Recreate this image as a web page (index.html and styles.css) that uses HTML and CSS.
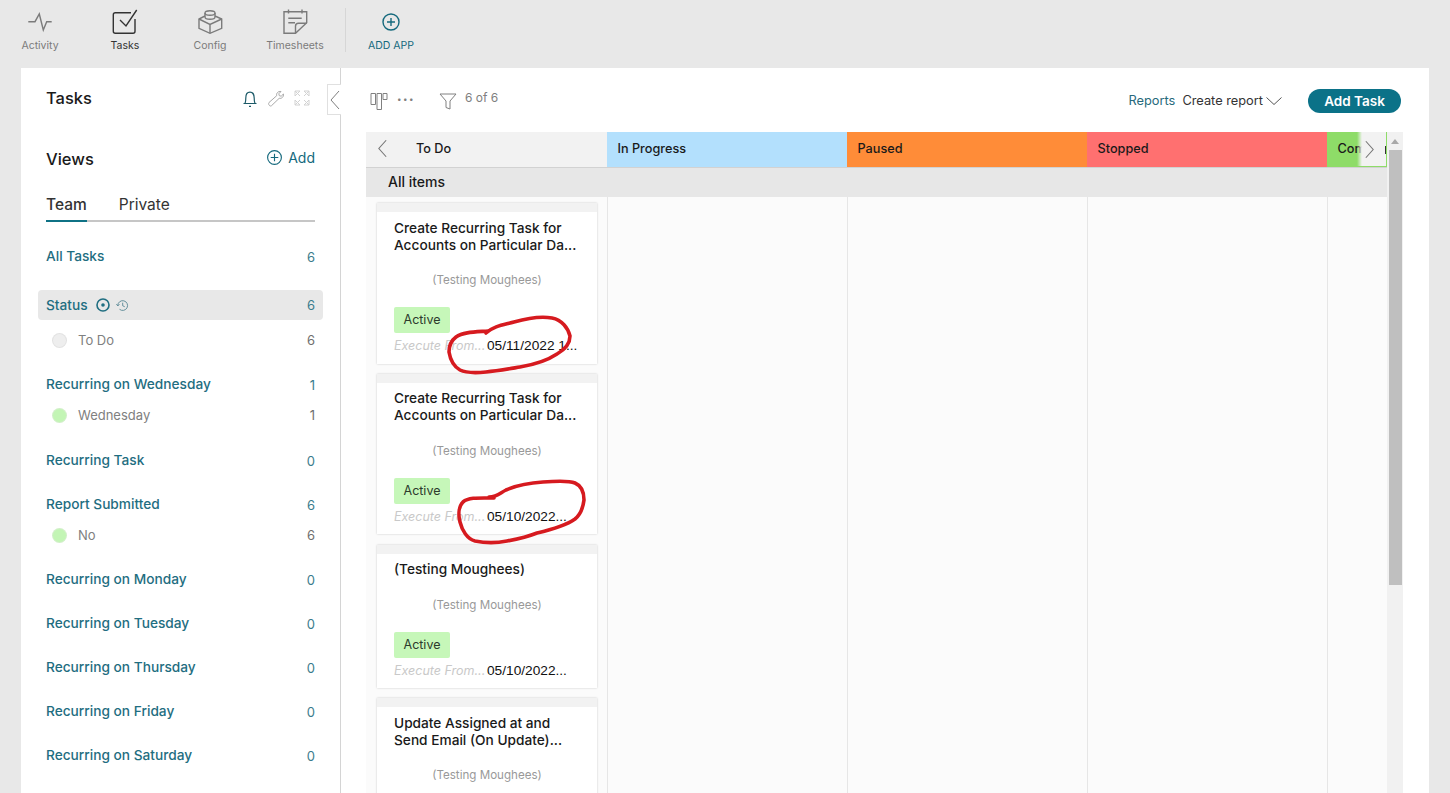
FILE: index.html
```html
<!DOCTYPE html>
<html lang="en">
<head>
  <meta charset="UTF-8" />
  <title>Tasks</title>
  <link rel="stylesheet" href="styles.css">
</head>
<body>
  <nav class="topnav">
    <a class="nav-item">
      <svg class="nav-icon" viewBox="0 0 28 28"><path d="M2.3 13.7H9L13.3 6l4 16 3.4-8.3h5"/></svg>
      <span>Activity</span>
    </a>
    <a class="nav-item active">
      <svg class="nav-icon" viewBox="0 0 28 28"><path d="M20 4.7H4.3a2 2 0 0 0-2 2v16.600a2 2 0 0 0 2 2H22a2 2 0 0 0 2-2V11"/><path d="M9 12l6 6L25.700 2"/></svg>
      <span>Tasks</span>
    </a>
    <a class="nav-item">
      <svg class="nav-icon" viewBox="0 0 28 28"><path d="M9 8L3 11v9.300l11 5 11.700-5V11L19 8"/><path d="M3 11l11 5.500L25.700 11M14 16.500v8.800"/><ellipse cx="14" cy="5" rx="5" ry="2.200"/><path d="M9 5v4c0 1.200 2.200 2.200 5 2.200s5-1 5-2.200V5"/></svg>
      <span>Config</span>
    </a>
    <a class="nav-item">
      <svg class="nav-icon" viewBox="0 0 28 28"><path d="M14.500 25.300H3V3.700h22.700v11z"/><path d="M14.500 25.300v-7a3 3 0 0 1 3-3h8.200M7.300 10.300h13.400M7.300 14.700H14M7.500 1.500v4M21 1.500v4"/></svg>
      <span>Timesheets</span>
    </a>
    <div class="nav-divider"></div>
    <a class="nav-add">
      <svg class="nav-icon" viewBox="0 0 28 28"><circle cx="14" cy="14" r="8"/><path d="M14 10v8M10 14h8"/></svg>
      <span>ADD APP</span>
    </a>
  </nav>

  <div class="panel">
    <aside class="sidebar">
      <div class="side-head">
        <h1>Tasks</h1>
        <div class="side-tools">
          <svg class="tool-icon bell" viewBox="0 0 18 18"><path d="M2.500 14.500h13M4 14.500c.6-1.200.8-2.600.8-5.500C4.800 5.800 6.400 3.200 9 3.200s4.200 2.600 4.200 5.800c0 2.900.2 4.300.8 5.500"/><path d="M8 17.300h2"/></svg>
          <svg class="tool-icon wrench" viewBox="0 0 18 18"><path d="M2 13.500l7.700-6.800c-.6-2.400 1.300-4.700 4.300-4.200l-2.200 2.300.5 1.900 1.900.5 2.200-2.200c.5 2.800-1.700 4.900-4.200 4.300L4.500 16.700c-1.500 1.300-3.800-1.500-2.500-3.200z"/></svg>
          <svg class="tool-icon expand" viewBox="0 0 18 18"><path d="M2 2l5 5M2 2v5l5-5zM16 2l-5 5M16 2v5l-5-5zM2 16l5-5M2 16v-5l5 5zM16 16l-5-5M16 16v-5l-5 5z"/></svg>
        </div>
      </div>

      <div class="views-head">
        <h2>Views</h2>
        <a class="views-add">
          <svg viewBox="0 0 18 18"><circle cx="9" cy="9" r="7.300"/><path d="M9 5v8M5 9h8"/></svg>
          Add
        </a>
      </div>

      <div class="tabs">
        <span class="tab current">Team</span>
        <span class="tab">Private</span>
      </div>

      <ul class="view-list">
        <li class="view-row"><span>All Tasks</span><b>6</b></li>
        <li class="view-row selected">
          <span>Status
            <svg class="status-icon" viewBox="0 0 16 16"><circle cx="8" cy="8" r="6"/><circle class="pip" cx="8" cy="8" r="1"/></svg>
            <svg class="history-icon" viewBox="0 0 16 16"><path d="M1.500 6.500l1.500 2 1.700-1.800"/><path d="M3 8a5.200 5.200 0 1 1 1.800 4"/><path d="M8.200 5v3.300l2.200 1"/></svg>
          </span>
          <b>6</b>
        </li>
        <li class="sub-row"><i class="dot grey"></i><span>To Do</span><b>6</b></li>
        <li class="view-row"><span>Recurring on Wednesday</span><b>1</b></li>
        <li class="sub-row"><i class="dot green"></i><span>Wednesday</span><b>1</b></li>
        <li class="view-row spaced"><span>Recurring Task</span><b>0</b></li>
        <li class="view-row"><span>Report Submitted</span><b>6</b></li>
        <li class="sub-row"><i class="dot green"></i><span>No</span><b>6</b></li>
        <li class="view-row"><span>Recurring on Monday</span><b>0</b></li>
        <li class="view-row"><span>Recurring on Tuesday</span><b>0</b></li>
        <li class="view-row"><span>Recurring on Thursday</span><b>0</b></li>
        <li class="view-row"><span>Recurring on Friday</span><b>0</b></li>
        <li class="view-row"><span>Recurring on Saturday</span><b>0</b></li>
        <li class="view-row"><span>Recurring on Sunday</span><b>0</b></li>
      </ul>
    </aside>

    <button class="collapse">
      <svg viewBox="0 0 12 24"><path d="M10 3L2 12l8 9"/></svg>
    </button>

    <main class="main">
      <div class="toolbar">
        <div class="toolbar-left">
          <svg class="board-icon" viewBox="0 0 18 18"><path d="M1 1.500h4.500v11H1zM7 1.500h4.500v16H7zM13 1.500h4v6h-4z"/></svg>
          <span class="dots">&#8226;&#8226;&#8226;</span>
          <svg class="filter-icon" viewBox="0 0 18 18"><path d="M1 2h16l-6 7v8l-4-1.500V9z"/></svg>
          <span class="count">6 of 6</span>
        </div>
        <div class="toolbar-right">
          <a class="reports">Reports</a>
          <a class="create">Create report</a>
          <svg class="down" viewBox="0 0 16 8"><path d="M.5.500L8 7.500 15.500.5"/></svg>
          <button class="add-task">Add Task</button>
        </div>
      </div>

      <div class="board">
        <div class="board-main">
          <div class="columns-head">
            <div class="col-head todo">
              <svg class="arrow" viewBox="0 0 12 20"><path d="M10 1L2 10l8 9"/></svg>
              To Do
            </div>
            <div class="col-head progress">In Progress</div>
            <div class="col-head paused">Paused</div>
            <div class="col-head stopped">Stopped</div>
            <div class="col-head complete">Complete</div>
            <div class="next-cols">
              <svg class="arrow" viewBox="0 0 12 20"><path d="M2 1l8 9-8 9"/></svg>
            </div>
          </div>
          <div class="lane-title">All items</div>
          <div class="columns">
            <div class="col first">
              <article class="card">
                <h3>Create Recurring Task for<br>Accounts on Particular Da...</h3>
                <p class="owner">(Testing Moughees)</p>
                <span class="badge">Active</span>
                <p class="meta"><em>Execute From...</em><span>05/11/2022 1...</span></p>
              </article>
              <article class="card">
                <h3>Create Recurring Task for<br>Accounts on Particular Da...</h3>
                <p class="owner">(Testing Moughees)</p>
                <span class="badge">Active</span>
                <p class="meta"><em>Execute From...</em><span>05/10/2022...</span></p>
              </article>
              <article class="card">
                <h3>(Testing Moughees)</h3>
                <p class="owner">(Testing Moughees)</p>
                <span class="badge">Active</span>
                <p class="meta"><em>Execute From...</em><span>05/10/2022...</span></p>
              </article>
              <article class="card">
                <h3>Update Assigned at and<br>Send Email (On Update)...</h3>
                <p class="owner">(Testing Moughees)</p>
                <span class="badge">Active</span>
                <p class="meta"><em>Execute From...</em><span>05/10/2022...</span></p>
              </article>
            </div>
            <div class="col"></div>
            <div class="col"></div>
            <div class="col"></div>
            <div class="col"></div>
          </div>
        </div>
        <div class="scrollbar">
          <div class="scroll-up"></div>
          <div class="scroll-thumb"></div>
        </div>
      </div>
    </main>
  </div>

  <!-- red marks drawn on top of the screenshot -->
  <svg class="scribbles" viewBox="0 0 1450 793">
    <path d="M486 333C494 326 503 325 514 322C528 318 541 316 552 318C562 320 568 328 570 336C570 344 564 350 557 354C545 362 532 365 520 367C508 369 497 371 486 372C476 373 466 373 460 370C453 366 450 358 449 352C449 345 452 340 456 337C463 332 475 332 488 331"/>
    <path d="M489 497C497 497 500 493 506 490C515 486 527 483 543 482C555 481 568 480 575 483C582 486 584 493 584 500C583 508 580 515 575 519C565 526 550 530 537 533C527 537 518 539 507 541C497 543 485 543 475 541C467 539 462 530 460 522C458 514 459 506 463 502C469 497 480 498 494 498"/>
  </svg>
</body>
</html>
```

FILE: styles.css
```css
* {
  box-sizing: border-box;
}

html,
body {
  height: 100%;
}

body {
  margin: 0;
  background: #e8e8e8;
  font-family: Inter, 'Liberation Sans', sans-serif;
  color: #1a1a1a;
  overflow: hidden;
  position: relative;
}

h1, h2, h3, p, ul {
  margin: 0;
  padding: 0;
}

svg {
  fill: none;
  stroke: currentColor;
  stroke-width: 1.2;
}

/* Top nav */
.topnav {
  height: 68px;
  display: flex;
  gap: 5px;
}

.nav-item,
.nav-add {
  width: 80px;
  padding-top: 8px;
  display: flex;
  flex-direction: column;
  align-items: center;
  font-size: 10.5px;
  color: #7b7b7b;
}

.nav-item span,
.nav-add span {
  margin-top: 3px;
}

.nav-icon {
  width: 28px;
  height: 28px;
  stroke-width: 1.4;
}

.nav-item.active {
  color: #333;
}

.nav-divider {
  width: 1px;
  height: 44px;
  margin: 8px 10px 0 5px;
  background: #d6d6d6;
}

.nav-add {
  width: 72px;
  margin-left: -6px;
  color: #15697d;
}

/* Main panel */
.panel {
  position: relative;
  margin: 0 21px;
  height: 725px;
  background: #fff;
  display: flex;
  overflow: hidden;
}

.sidebar {
  width: 320px;
  flex-shrink: 0;
  padding: 15px 25px 0;
  border-right: 1px solid #d4d4d4;
}

.side-head,
.views-head {
  height: 30px;
  display: flex;
  justify-content: space-between;
  align-items: center;
}

.side-head h1,
.views-head h2 {
  font-size: 16.5px;
  font-weight: 500;
}

.side-tools {
  display: flex;
  gap: 8px;
  margin-right: 4px;
}

.tool-icon {
  width: 18px;
  height: 18px;
  color: #a9a9a9;
}

.tool-icon.bell {
  color: #1c5a68;
}

.tool-icon.wrench {
  stroke-width: 1;
}

.tool-icon.expand {
  color: #d2d2d2;
  stroke-width: 1;
}

.views-head {
  margin-top: 31px;
}

.views-add {
  display: flex;
  align-items: center;
  gap: 5px;
  margin-top: -4px;
  font-size: 14px;
  color: #15697d;
}

.views-add svg {
  width: 17px;
  height: 17px;
}

.tabs {
  height: 33px;
  margin-top: 15px;
  display: flex;
  gap: 32px;
  border-bottom: 2px solid #c6c6c6;
}

.tab {
  margin-bottom: -2px;
  padding-top: 1px;
  font-size: 15.5px;
  line-height: 30px;
  color: #333;
}

.tab.current {
  font-weight: 500;
  border-bottom: 2px solid #0f7285;
}

.view-list {
  list-style: none;
  margin-top: 19px;
}

.view-row,
.sub-row {
  height: 30px;
  display: flex;
  align-items: center;
  justify-content: space-between;
  font-size: 13.7px;
}

.view-row {
  margin-bottom: 14px;
  font-weight: 500;
  color: #1f6e81;
}

.view-row.spaced {
  margin-top: 15px;
}

.view-row b {
  margin-top: 2px;
  font-weight: 400;
  font-size: 13px;
  color: #3a7c8d;
}

.view-row.selected {
  margin: 19px -8px 5px;
  padding: 0 8px;
  background: #e8e8e8;
  border-radius: 4px;
}

.view-row:has(+ .sub-row) {
  margin-bottom: 1px;
}

.view-row.selected:has(+ .sub-row) {
  margin-bottom: 5px;
}

.view-row.selected b {
  margin-top: 0;
}

.status-icon,
.history-icon {
  vertical-align: -3px;
}

.status-icon {
  width: 16px;
  height: 16px;
  margin-left: 4px;
  stroke-width: 1.6;
}

.status-icon .pip {
  fill: currentColor;
}

.history-icon {
  width: 15px;
  height: 15px;
  color: #5c8a96;
  stroke-width: 1;
}

.sub-row {
  margin-bottom: 14px;
  font-size: 13px;
  color: #808080;
}

.sub-row span {
  flex: 1;
  margin-left: 12px;
}

.sub-row b {
  font-weight: 400;
  color: #6f6f6f;
}

.dot {
  width: 13px;
  height: 13px;
  margin-left: 7px;
  border-radius: 50%;
}

.dot.grey {
  background: #eee;
  box-shadow: 0 0 0 1px #e2e2e2;
}

.dot.green {
  background: #c3f5b5;
  box-shadow: 0 0 0 1px #d2efc9;
}

.collapse {
  position: absolute;
  left: 306px;
  top: 16px;
  width: 14px;
  height: 31px;
  padding: 0;
  background: #fff;
  border: 1px solid #e0e0e0;
  border-right: none;
  color: #808080;
}

.collapse svg {
  display: block;
  width: 12px;
  height: 24px;
  margin: auto;
  stroke-width: 1;
}

/* Main area */
.main {
  flex: 1;
  min-width: 0;
  padding: 21px 26px 0 25px;
}

.toolbar {
  height: 24px;
  display: flex;
  justify-content: space-between;
  align-items: center;
  padding-right: 2px;
  margin-bottom: 19px;
}

.toolbar-left,
.toolbar-right {
  display: flex;
  align-items: center;
}

.toolbar-left {
  margin-left: 4px;
  color: #808080;
}

.board-icon {
  width: 18px;
  height: 18px;
  stroke-width: 1;
}

.dots {
  margin-left: 9px;
  margin-top: -5px;
  font-size: 8px;
  letter-spacing: 1.5px;
}

.filter-icon {
  width: 18px;
  height: 18px;
  margin-left: 24px;
  stroke-width: 1;
}

.count {
  margin-left: 8px;
  margin-top: -7px;
  font-size: 12px;
}

.reports {
  margin-top: -2px;
  font-size: 12.8px;
  color: #27697c;
}

.create {
  margin-top: -2px;
  margin-left: 7px;
  font-size: 12.8px;
  color: #333;
}

.down {
  width: 16px;
  height: 8px;
  margin-left: 3px;
  color: #555;
  stroke-width: 1;
}

.add-task {
  width: 93px;
  height: 24px;
  margin-left: 26px;
  padding: 0;
  border: none;
  border-radius: 12px;
  background: #0b7288;
  color: #fff;
  font-family: inherit;
  font-size: 13.5px;
  font-weight: 600;
}

/* Board */
.board {
  display: flex;
  height: 700px;
  background: #f2f2f2;
}

.board-main {
  width: 1021px;
  flex-shrink: 0;
}

.columns-head {
  position: relative;
  height: 36px;
  display: grid;
  grid-template-columns: 241px 240px 240px 240px 60px;
  overflow: hidden;
  border-bottom: 1px solid #d2d2d2;
}

.col-head {
  display: flex;
  align-items: center;
  padding: 0 0 2px 10.5px;
  font-size: 12.7px;
  font-weight: 500;
  white-space: nowrap;
  overflow: hidden;
}

.col-head.todo {
  background: #f2f2f2;
  padding-left: 11px;
}

.col-head.todo .arrow {
  margin-right: 28px;
}

.arrow {
  width: 11px;
  height: 19px;
  flex-shrink: 0;
  color: #777;
}

.col-head.progress { background: #b3e0fd; }
.col-head.paused { background: #ff8c38; }
.col-head.stopped { background: #ff7070; }
.col-head.complete { background: #8edc68; }

.next-cols {
  position: absolute;
  right: 0;
  top: 0;
  bottom: 0;
  width: 30px;
  display: flex;
  align-items: center;
  justify-content: center;
  padding-right: 4px;
  background: linear-gradient(90deg, rgba(242, 242, 242, 0), #f2f2f2 5px);
  border-right: 1px solid #8edc68;
  border-bottom: 1px solid #8edc68;
}

/* bit of the next column's label that peeks past the arrow */
.next-cols::after {
  content: "";
  position: absolute;
  right: 0;
  top: 14px;
  width: 1px;
  height: 8px;
  background: #333;
}

.lane-title {
  height: 29px;
  padding-left: 22px;
  background: #e7e7e7;
  font-size: 14px;
  font-weight: 500;
  line-height: 28px;
}

.columns {
  display: grid;
  grid-template-columns: 241px 240px 240px 240px 60px;
  height: 600px;
  background: #fbfbfb;
}

.col {
  border-left: 1px solid #e6e6e6;
}

.col.first {
  border-left: none;
  padding: 6px 9px 0 11px;
}

.card {
  width: 220px;
  margin-bottom: 10.25px;
  padding: 7.5px 17px 9.5px;
  background: #fff;
  border-top: 9px solid #f2f2f2;
  box-shadow: 0 0 2px rgba(0, 0, 0, 0.2);
}

.card h3 {
  font-size: 13.7px;
  font-weight: 500;
  line-height: 17px;
  white-space: nowrap;
}

.owner {
  margin: 18.5px 0 18px;
  text-align: center;
  font-size: 11.6px;
  line-height: 17px;
  color: #999;
}

.badge {
  display: block;
  width: 56px;
  height: 26px;
  border-radius: 2px;
  background: #c6f7b9;
  font-size: 12.5px;
  line-height: 25px;
  text-align: center;
  color: #2c3b2c;
}

.meta {
  margin-top: 4px;
  font-size: 12.5px;
  line-height: 17px;
  white-space: nowrap;
}

.meta em {
  display: inline-block;
  width: 93px;
  color: #c9c9c9;
}

.meta span {
  font-family: 'Liberation Sans', sans-serif;
  font-size: 13.7px;
  color: #111;
}

/* Scrollbar */
.scrollbar {
  position: relative;
  width: 16px;
  background: #f1f1f1;
}

.scroll-up {
  position: absolute;
  top: 7px;
  left: 4px;
  border: 4px solid transparent;
  border-top: none;
  border-bottom: 5px solid #a8a8a8;
}

.scroll-thumb {
  position: absolute;
  top: 18px;
  left: 2px;
  width: 13px;
  height: 435px;
  background: #bfbfbf;
}

.scribbles {
  position: absolute;
  left: 0;
  top: 0;
  width: 1450px;
  height: 793px;
  stroke: #d61a1f;
  stroke-width: 3.6;
  stroke-linecap: round;
  pointer-events: none;
}
```
